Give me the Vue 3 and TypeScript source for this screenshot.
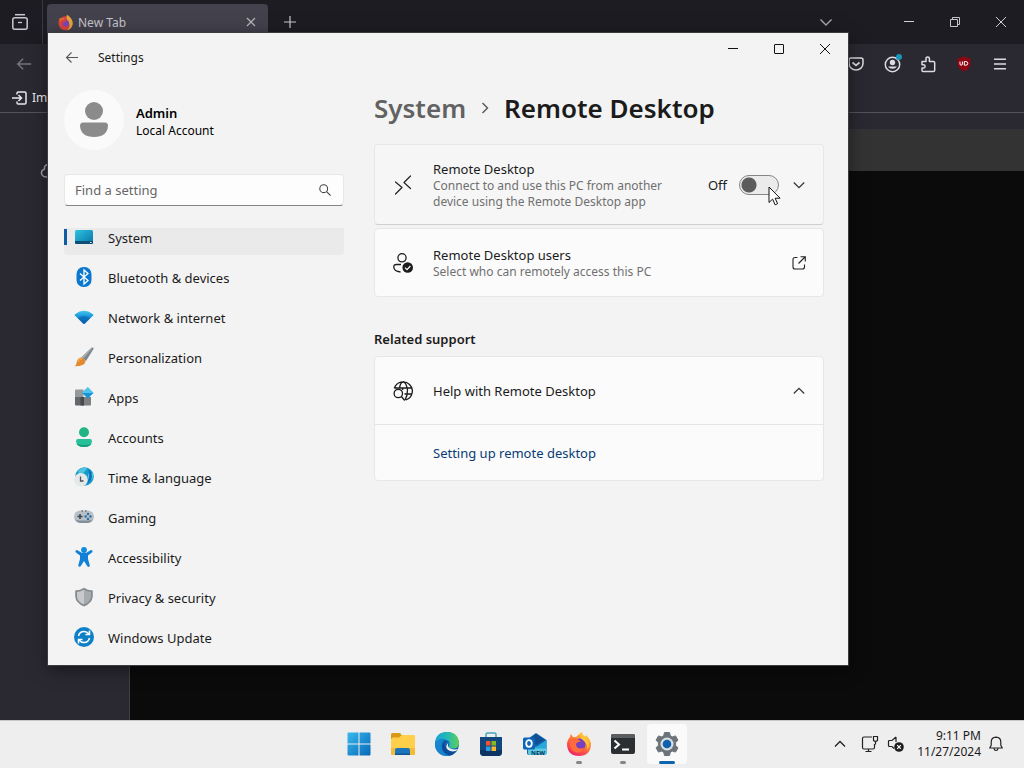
<script setup lang="ts">
import { ref } from 'vue'

interface NavItem {
  id: string
  label: string
}

const navItems: NavItem[] = [
  { id: 'system', label: 'System' },
  { id: 'bluetooth', label: 'Bluetooth & devices' },
  { id: 'network', label: 'Network & internet' },
  { id: 'personalization', label: 'Personalization' },
  { id: 'apps', label: 'Apps' },
  { id: 'accounts', label: 'Accounts' },
  { id: 'time', label: 'Time & language' },
  { id: 'gaming', label: 'Gaming' },
  { id: 'accessibility', label: 'Accessibility' },
  { id: 'privacy', label: 'Privacy & security' },
  { id: 'update', label: 'Windows Update' },
]

const active = ref('system')
const query = ref('')
const enabled = ref(false)
const helpOpen = ref(true)
</script>

<template>
  <div class="desktop">
    <div class="screen">
      <section class="browser" aria-label="Firefox">
        <div class="tabstrip">
          <button class="fx-view" aria-label="Firefox View">
            <svg width="18" height="18" viewBox="0 0 18 18" fill="none" stroke="#c9c8d0" stroke-width="1.500">
              <path d="M4 1.700h10" /><rect x="1.800" y="4.800" width="14.400" height="11.400" rx="2" /><path d="M7 9.500h4" stroke-width="1.300" />
            </svg>
          </button>
          <div class="tab">
            <svg width="17" height="17" viewBox="0 0 24 24">
              <circle cx="12" cy="13" r="10" fill="#d8433f" /><path d="M3 6c2 1 3 0 5 0 3 0 2 3 4 4-3 1-5 3-3 6-4-1-5-4-5-7z" fill="#e57a2a" />
              <path d="M14 1c5 3 9 8 8 14-1 4-4 7-8 8 3-3 5-6 3-10-1-4-5-6-3-12z" fill="#e0a63a" /><circle cx="12" cy="13" r="5" fill="#7846b8" /><path d="M6 8c4-1 6 1 8 2-2 2-5 1-6 3s2 5 5 4c-4 3-9 0-9-5z" fill="#d8433f" />
            </svg>
            <span class="tab-title">New Tab</span>
            <button class="tab-close" aria-label="Close tab">
              <svg width="10" height="10" viewBox="0 0 10 10" stroke="#b9b8c0" stroke-width="1.100"><path d="M1 1l8 8M9 1l-8 8" /></svg>
            </button>
          </div>
          <button class="new-tab" aria-label="New tab">
            <svg width="14" height="14" viewBox="0 0 14 14" stroke="#c9c8d0" stroke-width="1.200"><path d="M7 1v12M1 7h12" /></svg>
          </button>
          <span class="spacer"></span>
          <button class="all-tabs" aria-label="List all tabs">
            <svg width="14" height="14" viewBox="0 0 14 14" fill="none" stroke="#a9a8b0" stroke-width="1.400"><path d="M1.500 4.500L7 10l5.500-5.500" /></svg>
          </button>
          <button class="caption" aria-label="Minimize Firefox">
            <svg width="12" height="12" viewBox="0 0 12 12" stroke="#d0d0d6" stroke-width="1"><path d="M1 5.500h10" /></svg>
          </button>
          <button class="caption" aria-label="Restore Firefox">
            <svg width="12" height="12" viewBox="0 0 12 12" fill="none" stroke="#c4c4ca" stroke-width="1"><path d="M1.500 3.500h7v7h-7z" /><path d="M3.500 3.500v-2h7v7h-2" /></svg>
          </button>
          <button class="caption" aria-label="Close Firefox">
            <svg width="12" height="12" viewBox="0 0 12 12" stroke="#d0d0d6" stroke-width="1"><path d="M1 1l10 10M11 1L1 11" /></svg>
          </button>
        </div>
        <div class="toolbar">
          <button class="tool" aria-label="Go back">
            <svg width="16" height="16" viewBox="0 0 18 18" fill="none" stroke="#74737b" stroke-width="1.700"><path d="M17 9H2M8 3L2 9l6 6" /></svg>
          </button>
          <span class="spacer"></span>
          <button class="tool" aria-label="Pocket">
            <svg width="16" height="16" viewBox="0 0 16 16" fill="none" stroke="#dcdce0" stroke-width="1.500"><path d="M3 2h10a2 2 0 0 1 2 2v3.500a7 6.500 0 0 1-14 0V4a2 2 0 0 1 2-2z" /><path d="M4.500 6.500L8 9.500l3.500-3" stroke-width="1.700" /></svg>
          </button>
          <button class="tool" aria-label="Account">
            <svg width="20" height="20" viewBox="0 0 20 20">
              <circle cx="10.500" cy="10.500" r="7.200" fill="none" stroke="#dcdce0" stroke-width="1.500" /><circle cx="10.500" cy="8.500" r="2.700" fill="#dcdce0" /><path d="M6 12.500h9a5 4 0 0 1-9 0z" fill="#dcdce0" /><circle cx="17" cy="3" r="3" fill="#1795bd" />
            </svg>
          </button>
          <button class="tool" aria-label="Extensions">
            <svg width="18" height="18" viewBox="0 0 18 18" fill="none" stroke="#dcdce0" stroke-width="1.500" stroke-linejoin="round"><path d="M3 6.500h4V3.600a1.700 1.700 0 0 1 3.400 0v2.900h4q1.300 0 1.300 1.300v7.400q0 1.300-1.300 1.300H4q-1 0-1-1.200v-2.300h1.500a1.600 1.600 0 0 0 0-3.200H3z" /></svg>
          </button>
          <button class="tool" aria-label="uBlock Origin">
            <svg width="16" height="16" viewBox="0 0 16 16"><path d="M8 .5l6.500 2v6q-1 4.500-6.500 7-5.500-2.500-6.500-7v-6z" fill="#8d0713" /><path d="M4 5.500V8q0 1.200 1.200 1.200T6.400 8V5.500M8.300 5.500v3.700h1.500q2 0 2-1.800T9.800 5.500z" fill="none" stroke="#fff" stroke-width="1" /></svg>
          </button>
          <button class="tool" aria-label="Open menu">
            <svg width="14" height="14" viewBox="0 0 14 14" stroke="#dcdce0" stroke-width="1.500"><path d="M1 2.300h12M1 7h12M1 11.700h12" /></svg>
          </button>
        </div>
        <div class="bookmarks">
          <button class="bookmark">
            <svg width="16" height="16" viewBox="0 0 16 16" fill="none" stroke="#e8e8ec" stroke-width="1.500"><path d="M5 4.500V3.300Q5 2 6.300 2h6.400Q14 2 14 3.300v9.400q0 1.300-1.300 1.300H6.300Q5 14 5 12.700v-1.200M0 8h9M6.500 5L9.500 8l-3 3" /></svg>
            <span>Import</span>
          </button>
        </div>
        <div class="page">
          <div class="page-side">
            <svg width="24" height="20" viewBox="0 0 24 20" fill="none" stroke="#a3a2aa" stroke-width="1.500"><path d="M8 3.500Q4 4 4.500 8 1 9.500 1.500 12.500T6 16h12a4 4 0 0 0 0-9Q15 2 8 3.500z" /></svg>
          </div>
          <div class="terminal"><div class="terminal-bar"></div></div>
        </div>
      </section>

      <section class="window" aria-label="Settings">
        <header class="titlebar">
          <button class="back" aria-label="Back">
            <svg width="14" height="14" viewBox="0 0 14 14" fill="none" stroke="#555" stroke-width="1.100"><path d="M13 6.500H1.500M6.500 1.500l-5 5 5 5" /></svg>
          </button>
          <span class="app-name">Settings</span>
          <span class="spacer"></span>
          <button class="wbtn" aria-label="Minimize">
            <svg width="12" height="12" viewBox="0 0 12 12" stroke="#111"><path d="M1 5.500h10" /></svg>
          </button>
          <button class="wbtn" aria-label="Maximize">
            <svg width="12" height="12" viewBox="0 0 12 12" fill="none" stroke="#111"><rect x="1.500" y="1.500" width="9" height="9" rx=".5" /></svg>
          </button>
          <button class="wbtn" aria-label="Close">
            <svg width="12" height="12" viewBox="0 0 12 12" stroke="#111"><path d="M1 1l10 10M11 1L1 11" /></svg>
          </button>
        </header>

        <div class="body">
          <aside class="sidebar">
            <div class="profile">
              <span class="avatar">
                <svg width="32" height="38" viewBox="0 0 32 38" fill="#8b8b8b"><circle cx="16" cy="10" r="9" /><path d="M5 21.500h22q3 0 3 3.500Q29 36 16 36T2 25Q2 21.500 5 21.500z" /></svg>
              </span>
              <div class="who">
                <strong>Admin</strong>
                <span>Local Account</span>
              </div>
            </div>
            <div class="search">
              <input v-model="query" type="text" placeholder="Find a setting" aria-label="Find a setting" />
              <svg width="12" height="12" viewBox="0 0 12 12" fill="none" stroke="#444" stroke-width="1.100"><circle cx="4.700" cy="4.700" r="3.900" /><path d="M7.600 7.600l4 4" /></svg>
            </div>
            <nav class="nav">
              <ul>
                <li v-for="item in navItems" :key="item.id">
                  <button class="nav-item" :class="{ current: active === item.id }" @click="active = item.id">
                    <svg v-if="item.id === 'system'" class="nav-icon" viewBox="0 0 20 20">
                      <defs><linearGradient id="sys" x1="0" y1="0" x2="1" y2="1"><stop offset="0" stop-color="#2cc4e0" /><stop offset="1" stop-color="#0872a8" /></linearGradient></defs>
                      <rect x="1" y="3" width="18" height="14" rx="1.500" fill="url(#sys)" /><path d="M1 14h18v1.500q0 1.500-1.500 1.500h-15Q1 17 1 15.500z" fill="#0a4f76" /><path d="M16 15.500h1.500" stroke="#fff" stroke-width="1" />
                    </svg>
                    <svg v-else-if="item.id === 'bluetooth'" class="nav-icon" viewBox="0 0 20 20">
                      <rect x="2.500" y="0" width="15" height="20" rx="7" fill="#0b78d0" /><path d="M6 6.500l8 7-4 3.500V3l4 3.500-8 7" fill="none" stroke="#fff" stroke-width="1.300" />
                    </svg>
                    <svg v-else-if="item.id === 'network'" class="nav-icon" viewBox="0 0 20 20">
                      <defs><linearGradient id="net" x1="0" y1="0" x2="0" y2="1"><stop offset="0" stop-color="#3fc6ee" /><stop offset=".5" stop-color="#1590d6" /><stop offset="1" stop-color="#0a55a2" /></linearGradient></defs>
                      <path d="M1 7.200Q10 .5 19 7.200q.6.600.1 1.200l-8.200 8.100q-.9.800-1.800 0L.9 8.400Q.4 7.800 1 7.200z" fill="url(#net)" /><path d="M4 11.300q6-4.600 12 0l-5.100 5.200q-.9.800-1.800 0z" fill="#0b62b0" opacity=".6" />
                    </svg>
                    <svg v-else-if="item.id === 'personalization'" class="nav-icon" viewBox="0 0 20 20">
                      <path d="M18.800.6q1 .3.700 1.500L12 14l-4.500-3.800L17.500.8q.6-.4 1.300-.2z" fill="#7d868d" /><path d="M18.800.6L9.500 11.800l-2-1.600L17.500.8z" fill="#a5adb2" /><path d="M7 10.500q3.500.5 4.500 4-1 5-11 4.800 2-.8 2.300-4.300Q3.500 11 7 10.500z" fill="#e28a2d" /><path d="M4 15q1-4 4-3" stroke="#ffb65a" fill="none" />
                    </svg>
                    <svg v-else-if="item.id === 'apps'" class="nav-icon" viewBox="0 0 20 20">
                      <path d="M2 2.500h7.500v8H1v-7q0-1 1-1z" fill="#96999c" /><path d="M1 10h8.500v8.500H2q-1 0-1-1z" fill="#65686b" /><path d="M9 10h8v7.500q0 1-1 1H9z" fill="#7c8083" /><path d="M6.500 10H10v8.500H6.500z" fill="#47494c" /><path d="M13.800.2l5.700 5.700-5.700 5.700-5.700-5.700z" fill="#1596d5" /><path d="M13.800.2l5.700 5.700H8.100z" fill="#4fc4ef" />
                    </svg>
                    <svg v-else-if="item.id === 'accounts'" class="nav-icon" viewBox="0 0 20 20">
                      <circle cx="10" cy="5.200" r="5" fill="#20b485" /><path d="M4 12h12q2 0 2 2.200Q17.500 20 10 20T2 14.200Q2 12 4 12z" fill="#27c09b" /><path d="M2.500 17Q5 20 10 20t7.500-3q-7 2-15 0z" fill="#119e79" />
                    </svg>
                    <svg v-else-if="item.id === 'time'" class="nav-icon" viewBox="0 0 20 20">
                      <circle cx="10.500" cy="9.500" r="9.300" fill="#159bcb" /><path d="M4 3.500q5-4 9-2l-3 4-5 2zM14 7l5-1q1 4-2 7.500l-3-2z" fill="#4fc4e0" /><path d="M14 2q6 5 3 11l-4 4q4-8 1-15z" fill="#086fb2" /><circle cx="7" cy="12.800" r="6.800" fill="#e4e8e9" /><path d="M6.500 9.500v4.500h3" fill="none" stroke="#4b5358" stroke-width="1.300" />
                    </svg>
                    <svg v-else-if="item.id === 'gaming'" class="nav-icon" viewBox="0 0 20 20">
                      <rect x="0" y="3.500" width="20" height="12.500" rx="6.200" fill="#b8c0c6" /><path d="M1 12q2 4 6 4h6q4 0 6-4-2 2-6 1.500H7Q3 14 1 12z" fill="#858e96" /><path d="M6 7v5M3.500 9.500h5" stroke="#40474d" stroke-width="1.500" /><circle cx="14" cy="7" r="1.200" fill="#276da9" /><circle cx="16.500" cy="9.500" r="1.200" fill="#276da9" /><circle cx="11.700" cy="9.500" r="1.200" fill="#276da9" /><circle cx="14" cy="12" r="1.200" fill="#276da9" /><path d="M7.500 4h1.500M11 4h1.500" stroke="#40474d" />
                    </svg>
                    <svg v-else-if="item.id === 'accessibility'" class="nav-icon" viewBox="0 0 20 20">
                      <circle cx="10" cy="3" r="2.900" fill="#0e8ade" /><path d="M3.500 3.200L8 6h4l4.500-2.800q1.500-.5 2 .8.200 1-.6 1.500L14 8.500V12l1.800 6.300q.1 1.500-1.300 1.600-.9 0-1.300-.9L10 14l-3.200 5q-.5.900-1.400.8-1.400-.3-1.100-1.600L6 12V8.500L2 5.500q-.9-.7-.5-1.600.6-1.200 2-.7z" fill="#1280d6" />
                    </svg>
                    <svg v-else-if="item.id === 'privacy'" class="nav-icon" viewBox="0 0 20 20">
                      <path d="M10 .8q3.500 2.600 8.800 2.700v6Q18.300 16 10 19.500 1.700 16 1.200 9.500v-6Q6.500 3.400 10 .8z" fill="#858b8f" /><path d="M10 2.800V17.500Q3.200 14.500 3 9.500V5Q7 4.700 10 2.800z" fill="#c6cacc" /><path d="M10 2.800Q13 4.700 17 5v4.500q-.2 5-7 8z" fill="#a6abae" />
                    </svg>
                    <svg v-else class="nav-icon" viewBox="0 0 20 20">
                      <circle cx="10" cy="10" r="10" fill="#0f80c8" /><path d="M4.500 9q1-4.500 5.500-4.500 3 0 5 2.500M15.500 11q-1 4.500-5.500 4.500-3 0-5-2.500" fill="none" stroke="#fff" stroke-width="1.500" /><path d="M15.500 3.500V7.500h-4M4.500 16.500v-4h4" fill="none" stroke="#fff" stroke-width="1.500" />
                    </svg>
                    <span class="nav-label">{{ item.label }}</span>
                  </button>
                </li>
              </ul>
            </nav>
          </aside>

          <main class="main">
            <h1 class="crumbs">
              <a href="#system">System</a>
              <svg width="10" height="12" viewBox="0 0 10 12" fill="none" stroke="#555" stroke-width="1.400"><path d="M2.500 1l5 5-5 5" /></svg>
              <span>Remote Desktop</span>
            </h1>

            <div class="card hovered">
              <svg class="card-icon" viewBox="0 0 20 20" fill="none" stroke="#222" stroke-width="1.200" stroke-linecap="round" stroke-linejoin="round"><path d="M2.500 7l6.500 5.500-6.500 6.500M17.500 1L11 7.500l6.500 6" /></svg>
              <div class="card-text">
                <label for="rd-toggle" class="card-title">Remote Desktop</label>
                <p>Connect to and use this PC from another device using the Remote Desktop app</p>
              </div>
              <span class="state">{{ enabled ? 'On' : 'Off' }}</span>
              <span class="switch">
                <input id="rd-toggle" v-model="enabled" type="checkbox" role="switch" />
                <svg class="pointer" width="13" height="20" viewBox="0 0 13 20"><path d="M1 1v15.500l3.600-3.400 2.500 5.700 2.500-1.100-2.500-5.500h5z" fill="#fff" stroke="#111" stroke-width="1" /></svg>
              </span>
              <button class="end" aria-label="Show more settings">
                <svg width="12" height="12" viewBox="0 0 12 12" fill="none" stroke="#333" stroke-width="1.200"><path d="M.8 3.500L6 8.700l5.200-5.200" /></svg>
              </button>
            </div>

            <button class="card users">
              <svg class="card-icon" viewBox="0 0 20 20" fill="none" stroke="#1c1c1c" stroke-width="1.300"><circle cx="9" cy="4.800" r="4.100" /><path d="M8 11.500H3.500Q.8 11.500.8 14q0 4.300 6.700 5" /><circle cx="14.700" cy="14.500" r="5.300" fill="#1c1c1c" stroke="none" /><path d="M12 14.700l2 2 3.400-3.700" stroke="#fff" stroke-width="1.200" /></svg>
              <span class="card-text">
                <span class="card-title">Remote Desktop users</span>
                <span class="card-sub">Select who can remotely access this PC</span>
              </span>
              <span class="end">
                <svg width="14" height="14" viewBox="0 0 14 14" fill="none" stroke="#222" stroke-width="1.100"><path d="M5.500 1.500H3Q1 1.500 1 3.500V11q0 2 2 2h7.500q2 0 2-2V8.500M8.500.7h4.800v4.800M13 1L6.500 7.500" /></svg>
              </span>
            </button>

            <h2>Related support</h2>

            <div class="group">
              <button class="group-head" :aria-expanded="helpOpen" @click="helpOpen = !helpOpen">
                <svg class="card-icon" viewBox="0 0 20 20" fill="none" stroke="#1c1c1c" stroke-width="1.300"><path d="M1.300 7.500A9.200 9.200 0 1 1 13 18.800M1.500 7h17M11.500 13h7.500M6.500 7Q7.500 1 10.300 1T14.500 9q0 6-2.500 10M9.700 7v2" /><circle cx="5.300" cy="12.500" r="4.200" /><path d="M8.300 15.500l3.500 4" /></svg>
                <span class="card-text card-title">Help with Remote Desktop</span>
                <span class="end">
                  <svg width="12" height="12" viewBox="0 0 12 12" fill="none" stroke="#333" stroke-width="1.200"><path d="M.8 8.500L6 3.300l5.200 5.200" /></svg>
                </span>
              </button>
              <div v-if="helpOpen" class="group-row"><a href="#setup">Setting up remote desktop</a></div>
            </div>
          </main>
        </div>
      </section>
    </div>

    <footer class="taskbar">
      <div class="pins">
        <button class="pin" aria-label="Start">
          <svg width="24" height="24" viewBox="0 0 24 24"><defs><linearGradient id="win" x1="0" y1="0" x2="1" y2="1"><stop offset="0" stop-color="#39b9ee" /><stop offset="1" stop-color="#0867b7" /></linearGradient></defs><path d="M1.500.5h10v11H.5V1.500q0-1 1-1zM12.500.5h10q1 0 1 1v10h-11zM.5 12.500h11v11h-10q-1 0-1-1zM12.500 12.500h11v10q0 1-1 1h-10z" fill="url(#win)" /></svg>
        </button>
        <button class="pin" aria-label="File Explorer">
          <svg width="26" height="24" viewBox="0 0 26 24"><path d="M2.500 1H10l2 2.500L10 7H1V2.500Q1 1 2.500 1z" fill="#d79a17" /><path d="M2.500 5.500H9L12 3h11.500Q25 3 25 4.500v17q0 1.500-1.500 1.500h-21Q1 23 1 21.500v-14z" fill="#ffcf49" /><path d="M1 16h24v5.500q0 1.500-1.500 1.500h-21Q1 23 1 21.500z" fill="#f5bb34" /><path d="M5 23v-5q0-2 2-2h11q2 0 2 2v5z" fill="#1c74bd" /><path d="M5 21.500h15V23H5z" fill="#10568f" /></svg>
        </button>
        <button class="pin" aria-label="Microsoft Edge">
          <svg width="26" height="26" viewBox="0 0 26 26"><defs><linearGradient id="edge" x1="0" x2="1"><stop offset="0" stop-color="#1aa0dd" /><stop offset=".55" stop-color="#25bcae" /><stop offset="1" stop-color="#64cf54" /></linearGradient></defs><circle cx="13" cy="13" r="12" fill="#1262b2" /><path d="M1 12Q2 1 13 1q11 0 12 11 0 5.500-6 5.500-5 0-4-3 1.500-2.500-.5-4.500-5-4-13.500 2z" fill="url(#edge)" /><path d="M1 12q5-6 11-3.500-5 2-4 8 2 7 9 7.500Q8 27 3 20 .5 16 1 12z" fill="#1685ce" /><path d="M12 9.500q-3 4 .5 8 4 4 10.500 1.500-3 5-7.500 5.500Q8 22.500 8 16q.5-5 4-6.500z" fill="#0c4b96" /><path d="M14.500 11.500q-2 4 2 6 4 1.700 7.500.5l-2 2q-6 1.500-9-2-2-3 1.500-6.500z" fill="#eee" /></svg>
        </button>
        <button class="pin" aria-label="Microsoft Store">
          <svg width="24" height="26" viewBox="0 0 24 26"><path d="M7 6V3.500Q7 2 8.500 2h7Q17 2 17 3.500V6" fill="none" stroke="#43a8ba" stroke-width="1.500" /><path d="M1 6h22v15q0 4-4 4H5q-4 0-4-4z" fill="#12477d" /><path d="M1 19v2q0 4 4 4h14q4 0 4-4v-2z" fill="#0d3463" /><path d="M7 10h4.500v4.500H7z" fill="#ef5230" /><path d="M12.500 10H17v4.500h-4.500z" fill="#85b923" /><path d="M7 15.500h4.500V20H7z" fill="#2a9fe5" /><path d="M12.500 15.500H17V20h-4.500z" fill="#fbb92a" /></svg>
        </button>
        <button class="pin" aria-label="Outlook (new)">
          <svg width="26" height="24" viewBox="0 0 26 24"><path d="M5 7.500L14 1l10.500 7v13q0 2-2 2H7q-2 0-2-2z" fill="#1268b4" /><path d="M8 6.500L14 2l9 6-9 5z" fill="#0f4f94" /><path d="M6 16.500l9-2 9.500-6.500v13q0 2-2 2H8q-2 0-2-2z" fill="#29a9db" /><path d="M6 16.500h18.500V21q0 2-2 2H8q-2 0-2-2z" fill="#5cc9de" /><rect x="1" y="5.500" width="12" height="12" rx="1.500" fill="#0c65b6" /><ellipse cx="7" cy="11.500" rx="2.800" ry="3.300" fill="none" stroke="#fff" stroke-width="1.800" /><text x="9" y="22.500" class="new-badge">NEW</text></svg>
        </button>
        <button class="pin" aria-label="Firefox">
          <svg width="26" height="26" viewBox="0 0 26 26"><defs><linearGradient id="fox" x1=".8" y1="0" x2=".2" y2="1"><stop offset="0" stop-color="#ffd53e" /><stop offset=".5" stop-color="#ff7139" /><stop offset="1" stop-color="#ed1a6c" /></linearGradient></defs><path d="M4 6q0-2 1-3l2 3h3q3-3 6-5 0 3 3 5l1-2q5 5 5 10-1 11-12 11T1 14q0-5 3-8z" fill="url(#fox)" /><circle cx="13.500" cy="13.500" r="6" fill="#7440c4" /><path d="M5 8q5-2 8 1l2 1.500q-4 0-5 2.500 0 4 4 4.500 2 0 4-1-2 6-8 5-6-2-6-8z" fill="#ff6b3a" /><path d="M15 1q2 4 6 6 4 7 0 12 1-6-3-9-5-3-3-9z" fill="#ffc537" /></svg>
          <span class="dot"></span>
        </button>
        <button class="pin" aria-label="Terminal">
          <svg width="26" height="22" viewBox="0 0 26 22"><rect x="1" y="1" width="24" height="20" rx="2" fill="#2c2f31" /><path d="M1 5V3q0-2 2-2h20q2 0 2 2v2z" fill="#5b5e61" /><path d="M4.500 7.500l4.500 4-4.500 4M12 16.500h7" fill="none" stroke="#fff" stroke-width="2" /></svg>
          <span class="dot"></span>
        </button>
        <button class="pin running" aria-label="Settings">
          <svg width="26" height="26" viewBox="0 0 26 26"><path d="M10.500 1.500h5l.8 3.200 2 1.200 3.200-1 2.500 4.300-2.400 2.300v3l2.400 2.300-2.500 4.300-3.200-1-2 1.200-.8 3.200h-5l-.8-3.200-2-1.200-3.200 1L2 16.800l2.400-2.300v-3L2 9.200l2.500-4.300 3.200 1 2-1.200z" fill="#6d7479" stroke="#6d7479" stroke-linejoin="round" /><circle cx="13" cy="13" r="6.500" fill="#d9dee1" /><circle cx="13" cy="13" r="4.300" fill="#0f61ad" /></svg>
          <span class="dot on"></span>
        </button>
      </div>
      <div class="tray">
        <button class="tray-btn" aria-label="Show hidden icons">
          <svg width="12" height="12" viewBox="0 0 12 12" fill="none" stroke="#222" stroke-width="1.300"><path d="M1 8.500l5-5 5 5" /></svg>
        </button>
        <button class="tray-btn status" aria-label="Network and volume">
          <svg width="18" height="18" viewBox="0 0 18 18" fill="none" stroke="#222" stroke-width="1.200"><path d="M11 2H3Q1.500 2 1.500 3.500v9Q1.500 14 3 14h9q1.500 0 1.500-1.500V9M7.500 14v2.500M4.500 16.500h6" /><path d="M12.500 1.500h4v4q-2 1.500-4 0zM14.500 6v3.500" /></svg>
          <svg width="18" height="18" viewBox="0 0 18 18" fill="none" stroke="#222" stroke-width="1.200"><path d="M9 2L5 5.500H2.500q-1 0-1 1v4q0 1 1 1H5l2 2M9 2v5" /><circle cx="12" cy="12" r="4.800" fill="#1d1d1d" stroke="none" /><path d="M10.200 10.200l3.600 3.600M13.800 10.200l-3.600 3.600" stroke="#fff" /></svg>
        </button>
        <button class="tray-btn clock">
          <span>9:11 PM</span>
          <span>11/27/2024</span>
        </button>
        <button class="tray-btn" aria-label="Notifications">
          <svg width="16" height="16" viewBox="0 0 16 16" fill="none" stroke="#222" stroke-width="1.200" stroke-linejoin="round"><path d="M8 1.200q4.800.3 4.800 5v3l1.500 2.800H1.700l1.500-2.800v-3q0-4.700 4.800-5zM6 12.500q.3 2 2 2t2-2" /></svg>
        </button>
      </div>
    </footer>
  </div>
</template>

<style>
html,
body {
  margin: 0;
  background: #0b0b0c;
}
</style>

<style scoped>
* {
  box-sizing: border-box;
}

button {
  display: flex;
  align-items: center;
  justify-content: center;
  flex: none;
  margin: 0;
  padding: 0;
  border: 0;
  background: none;
  color: inherit;
  font: inherit;
  text-align: left;
}

svg {
  display: block;
  flex: none;
}

a {
  text-decoration: none;
}

.desktop {
  display: flex;
  flex-direction: column;
  height: 100vh;
  color: #1b1b1b;
  font-family: 'Noto Sans', 'Open Sans', sans-serif;
  font-size: 13px;
  line-height: 18px;
}

.screen {
  position: relative;
  flex: 1;
  min-height: 0;
  overflow: hidden;
}

.spacer {
  flex: 1;
}

/* Browser behind the settings window */
.browser {
  display: flex;
  flex-direction: column;
  height: 100%;
  background: #2a2931;
  color: #e8e8ec;
}

.tabstrip {
  display: flex;
  align-items: stretch;
  height: 44px;
  background: #1d1c22;
}

.fx-view {
  width: 43px;
  padding-right: 2px;
  border-right: 1px solid #39383f;
}

.tab {
  display: flex;
  align-items: center;
  gap: 4px;
  width: 221px;
  margin: 4px 0 4px 4px;
  padding: 0 12px 0 10px;
  border-radius: 4px;
  background: #42414c;
}

.tab-title {
  flex: 1;
  padding-top: 2px;
  color: #c4c3ca;
  font-size: 12px;
}

.new-tab {
  width: 44px;
}

.all-tabs {
  width: 28px;
  margin-right: 46px;
}

.caption {
  width: 46px;
}

.toolbar {
  display: flex;
  align-items: center;
  height: 40px;
  padding: 0 6px;
}

.tool {
  width: 36px;
  height: 36px;
}

.bookmarks {
  display: flex;
  align-items: center;
  height: 29px;
  padding: 0 12px;
  border-bottom: 1px solid #55545c;
}

.bookmark {
  gap: 4px;
  font-size: 12px;
}

.page {
  display: flex;
  flex: 1;
  min-height: 0;
}

.page-side {
  width: 129px;
  padding: 48px 0 0 40px;
}

.terminal {
  flex: 1;
  margin-top: 16px;
  border-left: 1px solid #404046;
  background: #0b0b0c;
}

.terminal-bar {
  height: 42px;
  background: #333;
}

/* Settings window */
.window {
  position: absolute;
  inset: 33px 176px 55px 48px;
  display: flex;
  flex-direction: column;
  overflow: hidden;
  background: #f3f3f3;
  box-shadow: 0 0 0 1px #3c3c40, 0 4px 16px rgba(0, 0, 0, 0.5);
}

.titlebar {
  display: flex;
  align-items: flex-start;
  height: 50px;
}

.back {
  width: 48px;
  height: 50px;
}

.app-name {
  padding-left: 2px;
  font-size: 12px;
  line-height: 50px;
}

.wbtn {
  width: 46px;
  height: 32px;
}

.body {
  display: flex;
  flex: 1;
  min-height: 0;
}

.sidebar {
  display: flex;
  flex-direction: column;
  width: 296px;
  padding: 7px 0 8px 16px;
}

.profile {
  display: flex;
  align-items: center;
  gap: 12px;
  height: 60px;
}

.avatar {
  display: grid;
  place-items: center;
  width: 60px;
  height: 60px;
  border-radius: 50%;
  background: #fafafa;
}

.who {
  display: flex;
  flex-direction: column;
  padding-top: 4px;
  color: #000;
  font-size: 12px;
}

.who strong {
  font-size: 13px;
  font-weight: 600;
}

.search {
  display: flex;
  align-items: center;
  height: 32px;
  margin-top: 24px;
  padding: 0 12px 0 10px;
  border: 1px solid #e8e8e8;
  border-bottom-color: #868686;
  border-radius: 4px;
  background: #fdfdfd;
}

.search input {
  flex: 1;
  min-width: 0;
  padding: 0;
  border: 0;
  outline: 0;
  background: none;
  color: #1b1b1b;
  font: inherit;
}

.search input::placeholder {
  color: #666;
  opacity: 1;
}

.nav {
  flex: 1;
  min-height: 0;
  margin-top: 22px;
  overflow: hidden;
}

/* The list is scrolled slightly past the top of the first entry. */
.nav ul {
  display: flex;
  flex-direction: column;
  gap: 4px;
  margin: -9px 0 0;
  padding: 0;
  list-style: none;
}

.nav-item {
  justify-content: flex-start;
  gap: 14px;
  width: 100%;
  height: 36px;
  padding-left: 7px;
  border-left: 3px solid transparent;
  border-radius: 4px;
}

.nav-item.current {
  background: linear-gradient(#0f5ba6, #0f5ba6) 0 center / 3px 16px no-repeat border-box, #eaeaea;
}

.nav-icon {
  width: 20px;
  height: 20px;
}

.nav-label {
  padding-top: 2px;
}

.main {
  flex: 1;
  min-width: 0;
  padding: 7px 24px 0 30px;
}

.crumbs {
  display: flex;
  align-items: center;
  gap: 14px;
  margin: 0 0 18px;
  font-size: 26px;
  font-weight: 600;
  line-height: 36px;
}

.crumbs a {
  color: #626262;
}

.card {
  display: flex;
  align-items: center;
  width: 100%;
  min-height: 69px;
  padding: 12px 12px 12px 18px;
  border: 1px solid #e7e7e7;
  border-radius: 4px;
  background: #fbfbfb;
}

.card.hovered {
  min-height: 81px;
  margin-bottom: 3px;
  border-bottom-color: #cfcfcf;
  background: #f6f6f6;
}

.card-icon {
  width: 20px;
  height: 20px;
  margin-right: 20px;
}

.card-text {
  flex: 1;
  min-width: 0;
}

.card-title,
.card-sub {
  display: block;
}

.card p,
.card-sub {
  max-width: 250px;
  margin: 0;
  color: #707070;
  font-size: 12px;
  line-height: 16px;
}

.state {
  padding: 0 12px;
}

.switch {
  position: relative;
  display: flex;
}

.switch input {
  width: 40px;
  height: 20px;
  margin: 0;
  border: 1px solid #858585;
  border-radius: 10px;
  appearance: none;
  background: radial-gradient(circle at 9px 9px, #5c5c5c 7px, transparent 8px) #ebebeb;
}

.switch input:checked {
  border-color: #0f5ba6;
  background: radial-gradient(circle at 29px 9px, #fff 6px, transparent 7px) #0f5ba6;
}

.pointer {
  position: absolute;
  top: 11px;
  left: 29px;
}

.end {
  display: grid;
  place-items: center;
  width: 24px;
  height: 24px;
}

.switch + .end {
  margin-left: 8px;
}

h2 {
  margin: 33px 0 8px;
  font-size: 13px;
  font-weight: 600;
  line-height: 18px;
}

.group {
  border: 1px solid #e7e7e7;
  border-radius: 4px;
  background: #fbfbfb;
}

.group-head {
  width: 100%;
  height: 67px;
  padding: 0 12px 0 18px;
}

.group-row {
  padding: 19px 58px 18px;
  border-top: 1px solid #e5e5e5;
}

.group-row a {
  color: #073c76;
}

/* Taskbar */
.taskbar {
  display: grid;
  grid-template-columns: 1fr auto 1fr;
  align-items: center;
  height: 48px;
  padding-bottom: 2px;
  border-top: 1px solid #c9c7c7;
  background: #eee;
}

.pins {
  display: flex;
  grid-column: 2;
  gap: 4px;
  padding-left: 2px;
}

.pin {
  position: relative;
  width: 40px;
  height: 40px;
  border-radius: 4px;
}

.pin.running {
  background: #fafafa;
}

.dot {
  position: absolute;
  bottom: 0;
  left: 50%;
  width: 6px;
  height: 3px;
  border-radius: 2px;
  background: #858585;
  transform: translateX(-50%);
}

.dot.on {
  width: 16px;
  background: #0b64ad;
}

.new-badge {
  fill: #06345f;
  font-size: 6px;
  font-weight: 700;
}

.tray {
  display: flex;
  align-items: center;
  justify-content: flex-end;
  padding-right: 16px;
}

.tray-btn {
  width: 24px;
  height: 40px;
}

.tray-btn.status {
  gap: 8px;
  width: 62px;
}

.tray-btn.clock {
  flex-direction: column;
  align-items: flex-end;
  width: auto;
  padding: 0 3px;
  font-size: 12px;
  line-height: 16px;
}
</style>
